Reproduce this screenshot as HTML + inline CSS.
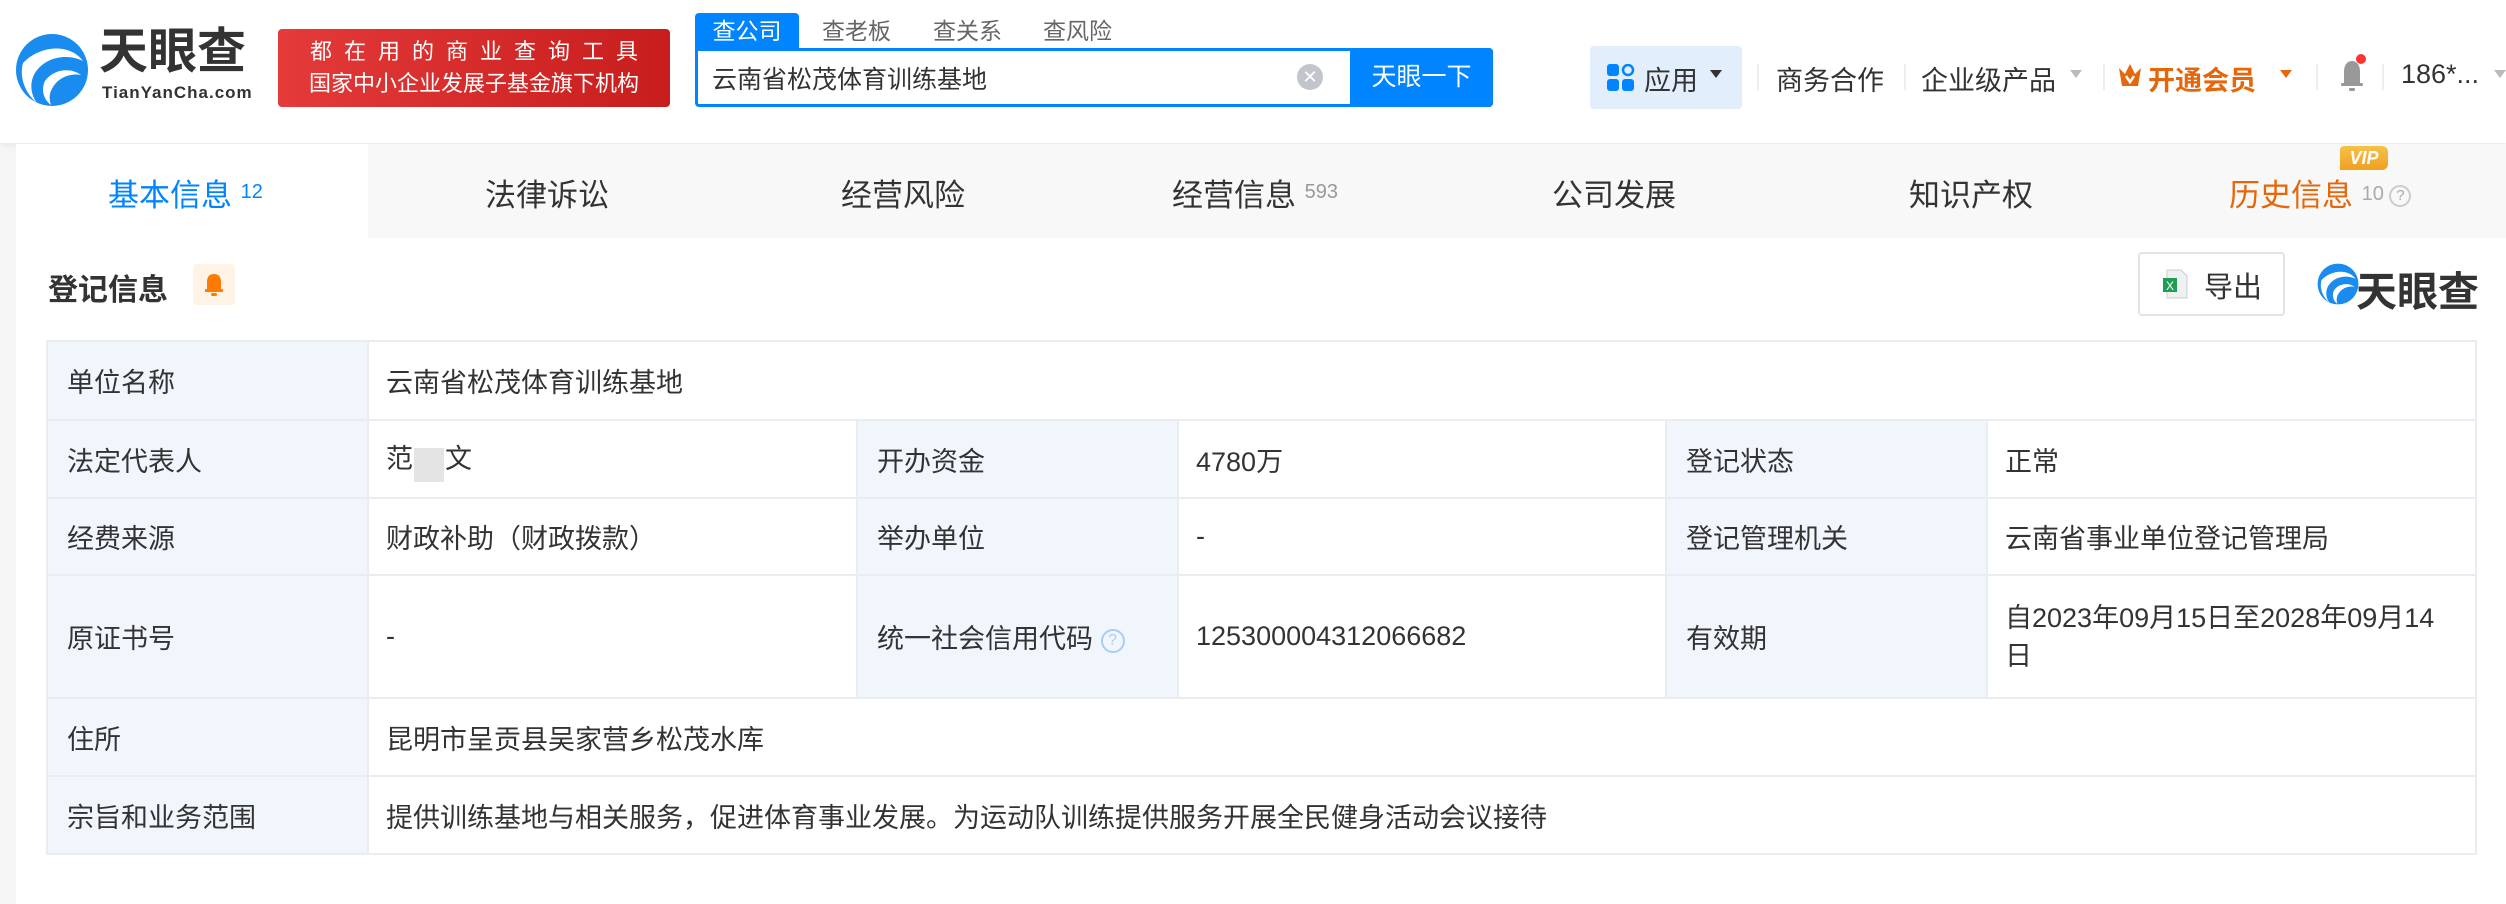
<!DOCTYPE html>
<html><head><meta charset="utf-8"><style>
*{margin:0;padding:0;box-sizing:border-box}
body{width:2506px;height:904px;background:#f5f5f5;font-family:"Liberation Sans","Noto Sans CJK SC",sans-serif;color:#333;position:relative;overflow:hidden}
.a{position:absolute;white-space:nowrap}
.hdr{position:absolute;left:0;top:0;width:2506px;height:143px;background:#fff;box-shadow:0 2px 6px rgba(0,0,0,.06)}
.tabs{position:absolute;left:16px;top:144px;width:2490px;height:94px;background:#f8f8f8}
.card{position:absolute;left:16px;top:238px;width:2490px;height:666px;background:#fff}
table{position:absolute;left:46px;top:340px;width:2431px;border-collapse:collapse;font-size:27px;color:#333}
td{border:2px solid #e9edf2;padding:0 17px;vertical-align:middle}
td.l{background:#f1f6fd;padding-left:19px}
</style></head><body>
<div class="hdr"></div>
<svg class="a" style="left:15px;top:33px" width="74" height="74" viewBox="0 0 74 74">
<circle cx="37" cy="37" r="36" fill="#1a8cf0"/>
<path d="M8 30 C25 12 55 10 68 28 C52 20 30 24 20 40 C14 50 16 62 22 70 C10 60 4 44 8 30Z" fill="#fff"/>
<path d="M30 48 C38 36 56 34 66 42 C56 40 44 44 38 54 C34 60 34 66 36 72 C28 66 26 56 30 48Z" fill="#fff"/>
</svg>
<div class="a" style="left:99px;top:24px;font-size:49px;line-height:56px;font-weight:bold;color:#333">天眼查</div>
<div class="a" style="left:102px;top:83px;font-size:17px;line-height:20px;color:#333;letter-spacing:1px;font-weight:bold">TianYanCha.com</div>
<div class="a" style="left:278px;top:29px;width:392px;height:78px;border-radius:4px;background:linear-gradient(90deg,#e43a3a,#c81d1d);color:#fff;font-size:22px;text-align:center;line-height:32px;padding-top:7px">
<div style="letter-spacing:12px;margin-right:-12px">都在用的商业查询工具</div><div>国家中小企业发展子基金旗下机构</div></div>
<div class="a" style="left:695px;top:13px;width:104px;height:36px;background:#0084ff;color:#fff;font-size:23px;text-align:center;line-height:36px;border-radius:4px 4px 0 0">查公司</div>
<div class="a" style="left:822px;top:13px;font-size:23px;color:#666;line-height:36px">查老板</div>
<div class="a" style="left:933px;top:13px;font-size:23px;color:#666;line-height:36px">查关系</div>
<div class="a" style="left:1043px;top:13px;font-size:23px;color:#666;line-height:36px">查风险</div>
<div class="a" style="left:695px;top:48px;width:798px;height:59px;border:3px solid #0084ff;border-radius:0 4px 4px 4px;background:#fff"></div>
<div class="a" style="left:712px;top:60px;font-size:25px;color:#333">云南省松茂体育训练基地</div>
<div class="a" style="left:1297px;top:64px;width:26px;height:26px;border-radius:50%;background:#c2c6cc;color:#fff;font-size:18px;text-align:center;line-height:26px">✕</div>
<div class="a" style="left:1350px;top:48px;width:143px;height:59px;background:#0084ff;color:#fff;font-size:25px;text-align:center;line-height:59px;border-radius:0 4px 4px 0">天眼一下</div>
<div class="a" style="left:1590px;top:46px;width:152px;height:63px;background:#e2eefc;border-radius:4px"></div>
<svg class="a" style="left:1607px;top:64px" width="28" height="28"><rect x="0" y="0" width="12" height="12" rx="3" fill="#0084ff"/><circle cx="21" cy="6" r="5" fill="none" stroke="#0084ff" stroke-width="2.5"/><rect x="0" y="15" width="12" height="12" rx="3" fill="#0084ff"/><rect x="15" y="15" width="12" height="12" rx="3" fill="#0084ff"/></svg>
<div class="a" style="left:1644px;top:59px;font-size:27px;color:#333">应用</div>
<div class="a" style="left:1710px;top:70px;border:6px solid transparent;border-top:8px solid #333"></div>
<div class="a" style="left:1757px;top:64px;width:2px;height:26px;background:#eee"></div>
<div class="a" style="left:1776px;top:59px;font-size:27px;color:#333">商务合作</div>
<div class="a" style="left:1904px;top:64px;width:2px;height:26px;background:#eee"></div>
<div class="a" style="left:1921px;top:59px;font-size:27px;color:#333">企业级产品</div>
<div class="a" style="left:2070px;top:70px;border:6px solid transparent;border-top:8px solid #bbb"></div>
<div class="a" style="left:2103px;top:64px;width:2px;height:26px;background:#eee"></div>
<svg class="a" style="left:2117px;top:62px" width="26" height="26"><path d="M2 6 L8 12 L13 2 L18 12 L24 6 L21 24 L5 24Z" fill="#e6660a"/><path d="M9 14 L13 20 L17 14" stroke="#fff" stroke-width="2.5" fill="none"/></svg>
<div class="a" style="left:2148px;top:59px;font-size:27px;color:#e6660a;font-weight:bold">开通会员</div>
<div class="a" style="left:2280px;top:70px;border:6px solid transparent;border-top:8px solid #e6660a"></div>
<div class="a" style="left:2316px;top:64px;width:2px;height:26px;background:#eee"></div>
<svg class="a" style="left:2336px;top:52px" width="34" height="42"><path d="M8 32 L8 20 C8 12 12 9 16 9 C20 9 24 12 24 20 L24 32Z" fill="#999"/><rect x="5" y="31" width="22" height="3" rx="1" fill="#999"/><rect x="13" y="36" width="6" height="3" rx="1" fill="#999"/><circle cx="25" cy="7" r="5" fill="#f33"/></svg>
<div class="a" style="left:2382px;top:64px;width:2px;height:26px;background:#eee"></div>
<div class="a" style="left:2401px;top:59px;font-size:27px;color:#333">186*...</div>
<div class="a" style="left:2494px;top:70px;border:6px solid transparent;border-top:8px solid #bbb"></div>
<div class="tabs"></div>
<div class="a" style="left:16px;top:144px;width:352px;height:94px;background:#fff"></div>
<div class="a" style="left:108px;top:170px;font-size:31px;color:#0084ff">基本信息 <span style="font-size:20px;vertical-align:8px">12</span></div>
<div class="a" style="left:485px;top:170px;font-size:31px;color:#333">法律诉讼</div>
<div class="a" style="left:841px;top:170px;font-size:31px;color:#333">经营风险</div>
<div class="a" style="left:1172px;top:170px;font-size:31px;color:#333">经营信息 <span style="font-size:20px;color:#999;vertical-align:8px">593</span></div>
<div class="a" style="left:1552px;top:170px;font-size:31px;color:#333">公司发展</div>
<div class="a" style="left:1909px;top:170px;font-size:31px;color:#333">知识产权</div>
<div class="a" style="left:2229px;top:170px;font-size:31px;color:#e6660a">历史信息 <span style="font-size:20px;color:#aaa;vertical-align:6px">10 <span style="display:inline-block;width:22px;height:22px;border:2px solid #ccc;border-radius:50%;font-size:15px;text-align:center;line-height:18px">?</span></span></div>
<div class="a" style="left:2340px;top:146px;width:48px;height:24px;background:linear-gradient(#f6c14a,#f0a020);border-radius:4px 6px 6px 0;color:#fff;font-weight:bold;font-style:italic;font-size:18px;text-align:center;line-height:24px">VIP</div>
<div class="card"></div>
<div class="a" style="left:48px;top:265px;font-size:30px;font-weight:bold;color:#333">登记信息</div>
<div class="a" style="left:193px;top:264px;width:42px;height:41px;background:#fff3e6;border-radius:4px"></div>
<svg class="a" style="left:204px;top:271px" width="20" height="26"><path d="M3 19 L3 11 C3 5 6 3 10 3 C14 3 17 5 17 11 L17 19Z" fill="#ff7a00"/><rect x="1" y="18" width="18" height="3" rx="1" fill="#ff7a00"/><rect x="7" y="22" width="6" height="3" rx="1.5" fill="#ff7a00"/></svg>
<div class="a" style="left:2138px;top:252px;width:147px;height:64px;border:2px solid #e4e4e4;border-radius:4px;background:#fff"></div>
<svg class="a" style="left:2163px;top:269px" width="26" height="30"><path d="M4 1 H18 L24 7 V29 H4Z" fill="#eef0f2" stroke="#ccc"/><rect x="0" y="9" width="14" height="14" fill="#1f9d55"/><text x="3" y="21" font-size="12" fill="#fff" font-family="Liberation Sans">X</text></svg>
<div class="a" style="left:2204px;top:264px;font-size:29px;color:#333">导出</div>
<svg class="a" style="left:2317px;top:263px" width="42" height="42" viewBox="0 0 74 74"><circle cx="37" cy="37" r="36" fill="#1a8cf0"/><path d="M8 30 C25 12 55 10 68 28 C52 20 30 24 20 40 C14 50 16 62 22 70 C10 60 4 44 8 30Z" fill="#fff"/><path d="M30 48 C38 36 56 34 66 42 C56 40 44 44 38 54 C34 60 34 66 36 72 C28 66 26 56 30 48Z" fill="#fff"/></svg>
<div class="a" style="left:2356px;top:258px;font-size:41px;font-weight:bold;color:#333">天眼查</div>
<table>
<colgroup><col style="width:321px"><col style="width:489px"><col style="width:321px"><col style="width:488px"><col style="width:321px"><col></colgroup>
<tr style="height:79px"><td class="l">单位名称</td><td colspan="5">云南省松茂体育训练基地</td></tr>
<tr style="height:78px"><td class="l">法定代表人</td><td>范<span style="display:inline-block;width:30px;height:34px;background:#e4e4e4;vertical-align:-14px;margin:0 1px"></span>文</td><td class="l">开办资金</td><td>4780万</td><td class="l">登记状态</td><td>正常</td></tr>
<tr style="height:77px"><td class="l">经费来源</td><td>财政补助（财政拨款）</td><td class="l">举办单位</td><td>-</td><td class="l">登记管理机关</td><td>云南省事业单位登记管理局</td></tr>
<tr style="height:123px"><td class="l">原证书号</td><td>-</td><td class="l">统一社会信用代码 <span style="display:inline-block;width:24px;height:24px;border:2px solid #a8cdf5;border-radius:50%;font-size:16px;color:#a8cdf5;text-align:center;line-height:20px;vertical-align:3px">?</span></td><td>125300004312066682</td><td class="l">有效期</td><td style="line-height:38px">自2023年09月15日至2028年09月14<br>日</td></tr>
<tr style="height:78px"><td class="l">住所</td><td colspan="5">昆明市呈贡县吴家营乡松茂水库</td></tr>
<tr style="height:78px"><td class="l">宗旨和业务范围</td><td colspan="5">提供训练基地与相关服务，促进体育事业发展。为运动队训练提供服务开展全民健身活动会议接待</td></tr>
</table>
</body></html>
